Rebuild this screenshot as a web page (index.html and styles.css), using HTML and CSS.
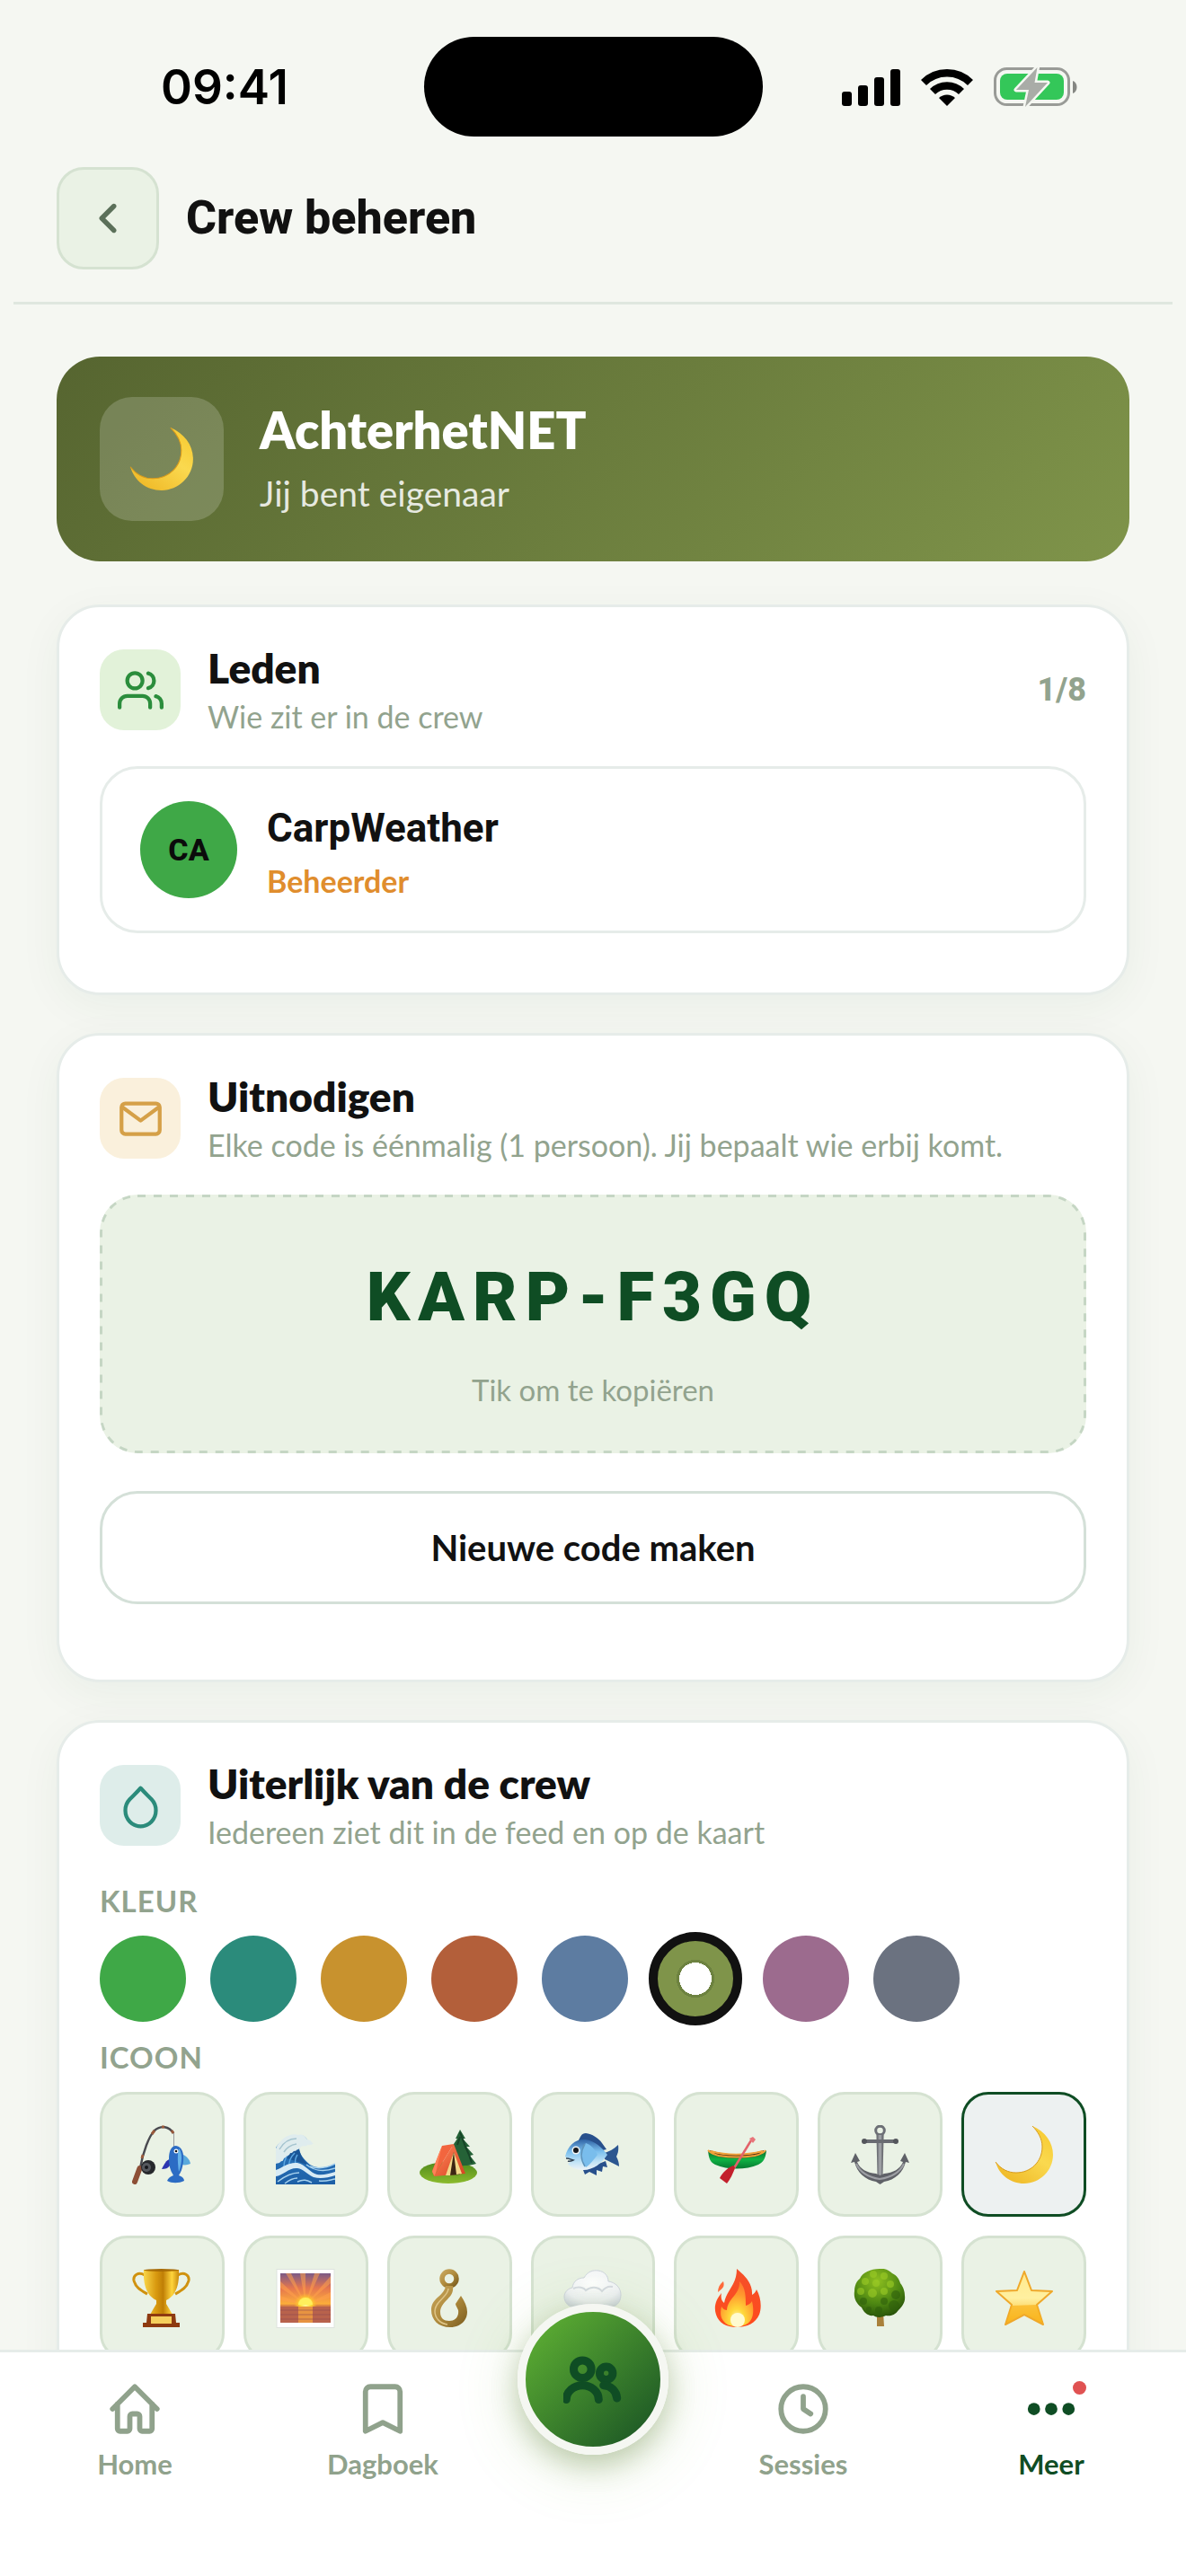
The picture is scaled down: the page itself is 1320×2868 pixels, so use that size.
FILE: index.html
```html
<!DOCTYPE html>
<html lang="nl">
<head>
  <meta charset="utf-8">
  <meta name="viewport" content="width=device-width, initial-scale=1">
  <title>Crew beheren</title>
  <link rel="stylesheet" href="styles.css">
</head>
<body>
<svg class="defs" aria-hidden="true">
  <defs>
    <linearGradient id="g-moon" x1="1" y1="0" x2="0.3" y2="1"><stop offset="0" stop-color="#f6c72c"/><stop offset="0.5" stop-color="#fad94f"/><stop offset="1" stop-color="#f0bb2a"/></linearGradient>
    <linearGradient id="g-gold" x1="0" y1="0" x2="1" y2="0"><stop offset="0" stop-color="#f9d649"/><stop offset="0.35" stop-color="#d99a10"/><stop offset="0.55" stop-color="#c07f06"/><stop offset="0.8" stop-color="#ffd53c"/><stop offset="1" stop-color="#c98a0c"/></linearGradient>
    <linearGradient id="g-sea" x1="0" y1="0" x2="0" y2="1"><stop offset="0" stop-color="#2f7fc4"/><stop offset="1" stop-color="#1d5fa6"/></linearGradient>
    <linearGradient id="g-sky" x1="0" y1="0" x2="0" y2="1"><stop offset="0" stop-color="#7b5a86"/><stop offset="0.3" stop-color="#e5764e"/><stop offset="0.62" stop-color="#fcae3a"/><stop offset="0.65" stop-color="#d98242"/><stop offset="1" stop-color="#8b4a58"/></linearGradient>
    <radialGradient id="g-sun"><stop offset="0" stop-color="#fff79a"/><stop offset="0.5" stop-color="#ffdc2e"/><stop offset="1" stop-color="#ffb52e" stop-opacity="0"/></radialGradient>
    <linearGradient id="g-tent" x1="0" y1="0" x2="1" y2="1"><stop offset="0" stop-color="#ff8a5c"/><stop offset="1" stop-color="#d8401f"/></linearGradient>
    <linearGradient id="g-grass" x1="0" y1="0" x2="0" y2="1"><stop offset="0" stop-color="#4f8a1c"/><stop offset="1" stop-color="#8cbb2d"/></linearGradient>
    <linearGradient id="g-fish" x1="0" y1="0" x2="0" y2="1"><stop offset="0" stop-color="#2f62a4"/><stop offset="0.4" stop-color="#7cc0ee"/><stop offset="0.75" stop-color="#c3e4f6"/><stop offset="1" stop-color="#eef3f6"/></linearGradient>
    <linearGradient id="g-hull" x1="0" y1="0" x2="0" y2="1"><stop offset="0" stop-color="#0a6a2c"/><stop offset="0.5" stop-color="#10b244"/><stop offset="1" stop-color="#077a30"/></linearGradient>
    <linearGradient id="g-steel" x1="0" y1="0" x2="1" y2="0"><stop offset="0" stop-color="#5c5f65"/><stop offset="0.5" stop-color="#a6a8ac"/><stop offset="1" stop-color="#56585e"/></linearGradient>
    <linearGradient id="g-hook" x1="0" y1="0" x2="1" y2="1"><stop offset="0" stop-color="#c6a55d"/><stop offset="0.5" stop-color="#b08b3d"/><stop offset="1" stop-color="#7a5c1f"/></linearGradient>
    <radialGradient id="g-cloud" cx="0.5" cy="0.35" r="0.7"><stop offset="0" stop-color="#ffffff"/><stop offset="0.7" stop-color="#f0f2f6"/><stop offset="1" stop-color="#d2d8e0"/></radialGradient>
    <linearGradient id="g-fire" x1="0" y1="0" x2="0" y2="1"><stop offset="0" stop-color="#f4502a"/><stop offset="1" stop-color="#ff4a1c"/></linearGradient>
    <radialGradient id="g-flame" cx="0.5" cy="0.85" r="0.8"><stop offset="0" stop-color="#fff9c0"/><stop offset="0.3" stop-color="#ffd83a"/><stop offset="0.7" stop-color="#ff9a2e"/><stop offset="1" stop-color="#ff7a2e"/></radialGradient>
    <radialGradient id="g-leaf" cx="0.45" cy="0.25" r="0.8"><stop offset="0" stop-color="#8fc020"/><stop offset="0.6" stop-color="#4c8612"/><stop offset="1" stop-color="#244c09"/></radialGradient>
    <linearGradient id="g-star" x1="0" y1="0" x2="0" y2="1"><stop offset="0" stop-color="#ffe98c"/><stop offset="0.5" stop-color="#fff0a0"/><stop offset="1" stop-color="#f9b314"/></linearGradient>
  </defs>

  <symbol id="i-moon" viewBox="0 0 66 66">
    <path d="M42 1C56 7 65 19 65 33 65 51 50 65 33 65 17 65 5 55 1 41 7 49 15 53 24 53 40 53 53 41 53 24 53 15 48 7 42 1Z" fill="url(#g-moon)"/>
    <path d="M42 1c6 6 11 14 11 23 0 17-13 29-29 29C15 53 7 49 1 41" fill="none" stroke="#d99b1c" stroke-width="1"/>
  </symbol>

  <symbol id="i-pole" viewBox="0 0 66 66">
    <path d="M9 48C12 30 19 12 25 6 32 0 41 1 46 9" fill="none" stroke="#4a4a50" stroke-width="2.4"/>
    <path d="M22 10l3-4M33 2l3 0M44 6l2 3M11 37l1-4" stroke="#9a5a3c" stroke-width="3"/>
    <path d="M46.500 9V24" stroke="#9a9ca0" stroke-width="1"/>
    <path d="M8.500 48L3 63" stroke="#8d4f36" stroke-width="6" stroke-linecap="round"/>
    <circle cx="18" cy="47" r="8" fill="#26282c"/><circle cx="16" cy="47" r="5" fill="#55585e"/><circle cx="16" cy="47" r="2" fill="#15161a"/>
    <path d="M42 38c-4 1-6 5-9 11 4 0 7-1 9-4z" fill="#2c35b0"/>
    <path d="M57 33c4 2 7 5 8 10-3 1-6 2-9 1z" fill="#5aa9dc"/>
    <path d="M49 23c7 1 9 9 8 18-1 8-3 12-5 15 3 1 6 3 6 6-6 3-14 3-19 0 1-3 4-5 7-6-4-6-5-12-5-18 0-8 2-15 8-15z" fill="#2c6cc4"/>
    <path d="M52 26c4 4 4 15 0 26-1-8-2-18 0-26z" fill="#67b4ea"/>
    <circle cx="49" cy="29" r="2.500" fill="#fff"/><circle cx="49" cy="29" r="1.300" fill="#111"/>
  </symbol>

  <symbol id="i-wave" viewBox="0 0 66 66">
    <path d="M0 25C6 16 16 10 26 11c4 0 8 2 9 6-6 0-9 3-9 8 0 7 5 13 12 19 9 5 16 4 28-1v23H0z" fill="url(#g-sea)"/>
    <path d="M5 34c4-7 12-12 20-12 1 10 5 16 11 22-10-3-20-5-31-10z" fill="#1a5596"/>
    <path d="M9 46c0-8 4-14 10-19M15 46c-1-6 2-11 6-15M22 44c-1-4 0-8 2-11" fill="none" stroke="#5aa5e0" stroke-width="1.500"/>
    <path d="M0 26C5 15 16 8 25 11c5-2 8 2 10 5 4 0 5 4 7 5-3 0-4 2-7 1-1 3-4 0-7 2-2 4-4 2-6 5-3-1-3 3-6 2-1 4-4 2-5 5-3 0-2 5-5 4-2 3-4 2-6 3z" fill="#dfecee"/>
    <path d="M4 27c4-7 11-12 19-12M9 30c3-5 8-8 14-9" fill="none" stroke="#a5c4cf" stroke-width="1.500"/>
    <path d="M0 50c8-3 14-9 24-8 9 2 14 11 22 13 7 1 13-1 20-3v4c-9 3-17 4-24 2-7-3-11-9-18-10C15 47 8 56 0 57z" fill="#d8ebf5"/>
    <path d="M38 46c9 3 18 2 28-3M34 44c10 8 20 8 32 4M2 63c9-7 16-10 24-10M24 63c7-3 10-2 16 1M48 62c7 1 12-1 18-2M10 65c5-4 9-6 14-6" fill="none" stroke="#a8d2ee" stroke-width="1.500"/>
  </symbol>

  <symbol id="i-tent" viewBox="0 0 66 66">
    <ellipse cx="32" cy="53" rx="32" ry="12" fill="url(#g-grass)"/>
    <path d="M44 40h4v8h-4z" fill="#6a4320"/>
    <path d="M45 5l6 10-3 0 8 9-4 0 8 9-4 1 7 9c-9 3-24 3-34 0l7-9-3-1 6-8-3-1 6-9-2 0z" fill="#256237"/>
    <path d="M45 8l3 8 3 8 4 9 3 9M45 13l-3 9" stroke="#174427" fill="none" stroke-width="2"/>
    <path d="M25 23l13-2-22 36-2-6z" fill="#f2653e"/>
    <path d="M25 23L14 52l3 5z" fill="#ff8259"/>
    <path d="M38 21L16 57l35-3z" fill="url(#g-tent)"/>
    <path d="M38 30l-8 26 15-1z" fill="#3d2513"/>
    <path d="M38 30l-9 26 5 0zM38 30l3 25 6-1z" fill="#f2d98a"/>
  </symbol>

  <symbol id="i-fish" viewBox="0 0 66 66">
    <path d="M16 19C19 13 20 9 25 9c7 1 14 5 18 11l5 7-12 3z" fill="#28508c"/>
    <path d="M46 31c5-2 10-4 15-9 1 7-1 11-2 13 2 4 3 7 3 11-6-3-11-6-16-8z" fill="#2c5690"/>
    <path d="M22 50l2 5 5-3 8 4 0-6 6 2 1-6 5 1-2-7z" fill="#28508c"/>
    <path d="M2 35C5 22 14 15 25 16c11 2 18 9 24 17-6 9-15 17-27 17C14 50 8 47 5 43l4-3z" fill="url(#g-fish)"/>
    <path d="M25 20c-6 8-6 19 0 27 5-3 9-9 13-14-3-6-7-11-13-13z" fill="#79bdec"/>
    <path d="M24 21c-5 8-5 17 0 25" fill="none" stroke="#5d93bb" stroke-width="1.500"/>
    <circle cx="14" cy="28" r="4.500" fill="#f2f4f4"/><circle cx="14" cy="28" r="3" fill="#14171c"/>
    <path d="M3 37c3 0 5 1 8 2-2 1-4 2-6 1" fill="none" stroke="#345" stroke-width="1.500"/>
  </symbol>

  <symbol id="i-canoe" viewBox="0 0 66 66">
    <path d="M3 28c20 6 40 6 60 0l-4 10H7z" fill="#4a2b0e"/>
    <path d="M1 28c1 9 2 13 8 16 14 6 34 6 48 0 6-3 8-7 9-16-4 4-8 6-13 7-13 2-27 2-40 0C9 34 5 32 1 28z" fill="url(#g-hull)"/>
    <path d="M1 28c4 4 8 5 12 6 13 2 27 2 40 0 5-1 9-2 12-6M4 29c18 5 38 5 58 0" fill="none" stroke="#f1a13a" stroke-width="2"/>
    <path d="M49 17L25 56" stroke="#e3626a" stroke-width="2.500"/>
    <path d="M47 15l4-2 3 3-3 4z" fill="#e8747a"/>
    <path d="M29 45c-7 3-12 8-15 14l8 6c4-5 7-11 9-18z" fill="#c3202c"/>
  </symbol>

  <symbol id="i-anchor" viewBox="0 0 66 66">
    <circle cx="32.500" cy="6" r="4.800" fill="none" stroke="#6d7076" stroke-width="3"/>
    <path d="M28.500 11h8l-1 47h-6z" fill="url(#g-steel)"/>
    <path d="M15 18h35" stroke="#6a6c72" stroke-width="4"/>
    <circle cx="15" cy="18" r="3" fill="#54565c"/><circle cx="50" cy="18" r="3" fill="#54565c"/>
    <path d="M0 42l5-11 5 9-3 1c3 8 11 12 21 13l4.500 2 4.500-2c10-1 18-5 21-13l-3-1 5-9 5 11-4-1c-3 12-12 20-24 22l-4.500 3-4.500-3C16 61 7 53 4 41z" fill="#5f6167"/>
    <path d="M6 43c4 9 13 15 26 17 14-2 23-8 27-17" fill="none" stroke="#9d9fa4" stroke-width="2"/>
  </symbol>

  <symbol id="i-trophy" viewBox="0 0 66 66">
    <path d="M14 7C7 3 1 7 2 13c2 8 8 11 15 15M51 7c7-4 13 0 12 6-2 8-8 11-15 15" fill="none" stroke="#d0920f" stroke-width="3"/>
    <path d="M13 1h39c1 16-3 29-14 34v4l3 5 4 7H20l4-7 3-5v-4C16 30 12 17 13 1z" fill="url(#g-gold)"/>
    <ellipse cx="32.500" cy="1.500" rx="19.500" ry="1.500" fill="#a86c06"/>
    <path d="M17 50h31l1 10h4v5H12v-5h4z" fill="#8e3a10"/>
    <path d="M21 53h23v8H21z" fill="#f5cf5c"/>
  </symbol>

  <symbol id="i-sunrise" viewBox="0 0 66 66">
    <rect x="1" y="0.500" width="64" height="65" fill="#fff" stroke="#dde3dd"/>
    <rect x="5" y="5" width="56" height="55" fill="url(#g-sky)"/>
    <path d="M33 40L5 14v7zM33 40L11 5h6zM33 40L27 5h6zM33 40L43 5h6zM33 40L61 8v8zM33 40L5 30v5zM33 40L61 26v6z" fill="#ffa04a" opacity="0.55"/>
    <circle cx="33" cy="40" r="13" fill="url(#g-sun)"/>
    <path d="M25 40a8 8 0 0 1 16 0z" fill="#ffef5c"/>
    <path d="M5 42h56v18H5z" fill="#b8624c"/>
    <path d="M25 42h16v18H25z" fill="#f3a03e" opacity="0.8"/>
    <path d="M5 46h56M5 51h56M5 56h56" stroke="#8f4a52" stroke-width="1" opacity="0.6"/>
  </symbol>

  <symbol id="i-hook" viewBox="0 0 66 66">
    <circle cx="33" cy="11" r="8" fill="none" stroke="url(#g-hook)" stroke-width="5.500"/>
    <path d="M29 19h8c1 7-2 11-6 15-5 5-8 9-8 14 0 7 4 10 10 10 7 0 11-5 10-12-1-3-3-5-3-7 2-3 4-6 6-9 4 6 7 12 7 18 0 10-8 17-19 17-13 0-21-8-21-19 0-14 14-15 16-27z" fill="url(#g-hook)"/>
    <path d="M32 22c0 9-15 14-15 25 0 8 6 14 14 15" fill="none" stroke="#dfc587" stroke-width="1.500"/>
  </symbol>

  <symbol id="i-cloud" viewBox="0 0 66 66">
    <path d="M10 21c1-7 6-11 13-11 4-7 10-9 16-8 7 1 11 6 11 12 8 1 14 7 14 15 0 9-6 14-14 14H14C6 43 1 38 1 31c0-5 4-9 9-10z" fill="url(#g-cloud)" stroke="#cfd5de"/>
    <path d="M11 22c6-3 12-1 14 2 6-5 14-4 18 1 4-5 8-6 12-5" fill="none" stroke="#d5dae2" stroke-width="2"/>
  </symbol>

  <symbol id="i-fire" viewBox="0 0 66 66">
    <path d="M33 0c7 6 18 15 17 29 2-1 4-3 5-6 5 9 6 20 3 28-4 9-13 14-25 14S13 60 10 51C7 42 10 34 16 27c-1 5 0 9 3 11 3-15 14-20 14-38z" fill="url(#g-fire)"/>
    <path d="M36 14c7 7 7 17 7 27 3-1 5-2 7-5 3 12 1 23-7 26-7 3-16 3-22-1-6-5-7-11-5-19 2 3 4 4 6 4 1-14 15-17 14-32z" fill="url(#g-flame)"/>
    <path d="M18 14c2 6-1 8-6 12 0-5 2-9 6-12z" fill="#ff6a3a"/>
    <ellipse cx="34" cy="57" rx="8" ry="8" fill="#fffbd0"/>
  </symbol>

  <symbol id="i-tree" viewBox="0 0 66 66">
    <path d="M29 48h7l1 16h-8z" fill="#a9803a"/>
    <path d="M32 0c6-1 11 2 14 5 5 2 8 7 9 11 4 5 5 10 5 14 1 7-3 12-7 16-4 6-10 7-14 6-4 2-10 3-14 0-6 1-11-4-13-9C5 38 3 31 4 25c0-6 2-11 6-14C13 4 22 0 32 0z" fill="url(#g-leaf)"/>
    <g fill="#9ccc26" opacity="0.6"><circle cx="25" cy="6" r="4"/><circle cx="37" cy="8" r="4"/><circle cx="16" cy="14" r="4"/><circle cx="28" cy="16" r="4"/><circle cx="44" cy="17" r="4"/><circle cx="11" cy="25" r="4"/><circle cx="24" cy="27" r="5"/><circle cx="37" cy="25" r="4"/></g>
    <g fill="#2f600c" opacity="0.6"><circle cx="50" cy="29" r="5"/><circle cx="14" cy="36" r="4"/><circle cx="37" cy="36" r="4"/><circle cx="48" cy="41" r="6"/><circle cx="31" cy="46" r="4"/><circle cx="20" cy="45" r="3"/></g>
  </symbol>

  <symbol id="i-star" viewBox="0 0 66 66">
    <path d="M33 3l8 21 23 1-17 15 7 22-21-11-21 11 7-22L2 25l23-1z" fill="url(#g-star)" stroke="#efa82a" stroke-width="2" stroke-linejoin="round"/>
    <path d="M13 60l6-19 28-1 7 21-21-11z" fill="#f9b41c" opacity="0.7"/>
  </symbol>
</svg>

<div class="app">
  <div class="status">
    <span class="status-time">09:41</span>
    <span class="island"></span>
    <span class="status-icons">
      <svg width="65" height="42" viewBox="0 0 65 42"><rect y="26" width="11" height="16" rx="3"/><rect x="18" y="19" width="11" height="23" rx="3"/><rect x="36" y="10" width="11" height="32" rx="3"/><rect x="54" y="1" width="11" height="41" rx="3"/></svg>
      <svg width="58" height="42" viewBox="0 0 58 42"><path d="M3 16a36.800 36.800 0 0 1 52 0M13 26a22.700 22.700 0 0 1 32 0" fill="none" stroke="#000" stroke-width="8.500"/><path d="M29 42l-9-9a13 13 0 0 1 18 0z"/></svg>
      <svg width="93" height="46" viewBox="0 0 93 46"><rect x="1.500" y="2.500" width="82" height="40" rx="13" fill="none" stroke="#999b97" stroke-width="3"/><path d="M88 16c6 2 6 12 0 14z" fill="#858783"/><rect x="7" y="8" width="71" height="29" rx="8" fill="#34c759"/><path d="M48.500 1L25 26h14l-4 19 25-27H45.500z" fill="#a9aca7" stroke="#f5f7f2" stroke-width="5" stroke-linejoin="round" paint-order="stroke"/></svg>
    </span>
  </div>

  <header class="topbar">
    <button class="back" type="button" aria-label="Terug">
      <svg width="54" height="54" viewBox="0 0 24 24"><path d="M15 18l-6-6 6-6"/></svg>
    </button>
    <h1 class="topbar-title">Crew beheren</h1>
  </header>

  <main class="content">
    <section class="hero">
      <span class="hero-icon"><svg width="72" height="72"><use href="#i-moon"/></svg></span>
      <div class="hero-text">
        <h2 class="hero-name">AchterhetNET</h2>
        <p class="hero-role">Jij bent eigenaar</p>
      </div>
    </section>

    <section class="card">
      <div class="card-head">
        <span class="card-icon card-icon-green"><svg width="51" height="51" viewBox="0 0 24 24"><path d="M17 21v-2a4 4 0 0 0-4-4H5a4 4 0 0 0-4 4v2M23 21v-2a4 4 0 0 0-3-3.870M16 3.130a4 4 0 0 1 0 7.750"/><circle cx="9" cy="7" r="4"/></svg></span>
        <div class="card-titles">
          <h2 class="card-title">Leden</h2>
          <p class="card-sub">Wie zit er in de crew</p>
        </div>
        <span class="count">1/8</span>
      </div>
      <div class="member">
        <span class="avatar">CA</span>
        <div class="member-text">
          <p class="member-name">CarpWeather</p>
          <p class="member-role">Beheerder</p>
        </div>
      </div>
    </section>

    <section class="card">
      <div class="card-head">
        <span class="card-icon card-icon-amber"><svg width="51" height="51" viewBox="0 0 24 24"><rect x="2" y="4" width="20" height="16" rx="2"/><path d="M2.500 6l9.500 7 9.500-7"/></svg></span>
        <div class="card-titles">
          <h2 class="card-title">Uitnodigen</h2>
          <p class="card-sub">Elke code is éénmalig (1 persoon). Jij bepaalt wie erbij komt.</p>
        </div>
      </div>
      <button class="code" type="button">
        <svg class="code-outline" aria-hidden="true"><rect x="0" y="0" width="100%" height="100%" rx="42"/></svg>
        <span class="code-value">KARP-F3GQ</span>
        <span class="code-hint">Tik om te kopiëren</span>
      </button>
      <button class="new-code" type="button">Nieuwe code maken</button>
    </section>

    <section class="card">
      <div class="card-head">
        <span class="card-icon card-icon-teal"><svg width="51" height="51" viewBox="0 0 24 24"><path d="M12 2.700C14 5 16 6.800 17.700 8.600a8 8.300 0 1 1-11.400 0C8 6.800 10 5 12 2.700z"/></svg></span>
        <div class="card-titles">
          <h2 class="card-title">Uiterlijk van de crew</h2>
          <p class="card-sub">Iedereen ziet dit in de feed en op de kaart</p>
        </div>
      </div>
      <h3 class="field-label">KLEUR</h3>
      <div class="swatches" role="radiogroup" aria-label="Kleur">
        <input class="swatch green" type="radio" name="kleur" aria-label="Groen">
        <input class="swatch teal" type="radio" name="kleur" aria-label="Turquoise">
        <input class="swatch amber" type="radio" name="kleur" aria-label="Oker">
        <input class="swatch rust" type="radio" name="kleur" aria-label="Roest">
        <input class="swatch blue" type="radio" name="kleur" aria-label="Blauw">
        <input class="swatch olive" type="radio" name="kleur" aria-label="Olijf" checked>
        <input class="swatch mauve" type="radio" name="kleur" aria-label="Mauve">
        <input class="swatch slate" type="radio" name="kleur" aria-label="Leisteen">
      </div>
      <h3 class="field-label">ICOON</h3>
      <div class="tiles" role="radiogroup" aria-label="Icoon">
        <label class="tile"><input type="radio" name="icoon" aria-label="Hengel"><svg><use href="#i-pole"/></svg></label>
        <label class="tile"><input type="radio" name="icoon" aria-label="Golf"><svg><use href="#i-wave"/></svg></label>
        <label class="tile"><input type="radio" name="icoon" aria-label="Tent"><svg><use href="#i-tent"/></svg></label>
        <label class="tile"><input type="radio" name="icoon" aria-label="Vis"><svg><use href="#i-fish"/></svg></label>
        <label class="tile"><input type="radio" name="icoon" aria-label="Kano"><svg><use href="#i-canoe"/></svg></label>
        <label class="tile"><input type="radio" name="icoon" aria-label="Anker"><svg><use href="#i-anchor"/></svg></label>
        <label class="tile"><input type="radio" name="icoon" aria-label="Maan" checked><svg><use href="#i-moon"/></svg></label>
        <label class="tile"><input type="radio" name="icoon" aria-label="Beker"><svg><use href="#i-trophy"/></svg></label>
        <label class="tile"><input type="radio" name="icoon" aria-label="Zonsopgang"><svg><use href="#i-sunrise"/></svg></label>
        <label class="tile"><input type="radio" name="icoon" aria-label="Haak"><svg><use href="#i-hook"/></svg></label>
        <label class="tile"><input type="radio" name="icoon" aria-label="Wolk"><svg><use href="#i-cloud"/></svg></label>
        <label class="tile"><input type="radio" name="icoon" aria-label="Vuur"><svg><use href="#i-fire"/></svg></label>
        <label class="tile"><input type="radio" name="icoon" aria-label="Boom"><svg><use href="#i-tree"/></svg></label>
        <label class="tile"><input type="radio" name="icoon" aria-label="Ster"><svg><use href="#i-star"/></svg></label>
      </div>
    </section>
  </main>

  <nav class="tabs">
    <a class="tab" href="#home"><svg viewBox="0 0 24 24"><path d="M3 12l9-9 9 9M5 10v10a1 1 0 0 0 1 1h3m10-11v10a1 1 0 0 1-1 1h-3m-6 0a1 1 0 0 0 1-1v-5a1 1 0 0 1 1-1h2a1 1 0 0 1 1 1v5a1 1 0 0 0 1 1"/></svg>Home</a>
    <a class="tab" href="#dagboek"><svg viewBox="0 0 24 24"><path d="M5 5a2 2 0 0 1 2-2h10a2 2 0 0 1 2 2v16l-7-3.500L5 21V5z"/></svg>Dagboek</a>
    <a class="fab" href="#crew" aria-label="Crew"><svg width="66" height="66" viewBox="-33 -33 66 66"><circle cx="-11.700" cy="-11.300" r="9.800"/><circle cx="14.700" cy="-6.700" r="7.200"/><path d="M-29.700 22.500A18 15.800 0 0 1 6.300 22.500M11.700 6.700C20 7 26 13 26.700 21"/></svg></a>
    <a class="tab" href="#sessies"><svg viewBox="0 0 24 24"><circle cx="12" cy="12" r="9"/><path d="M12 7v5l3 2"/></svg>Sessies</a>
    <a class="tab tab-active" href="#meer"><span class="tab-icon"><svg viewBox="0 0 24 24"><circle class="dot" cx="5" cy="12" r="2.500"/><circle class="dot" cx="12" cy="12" r="2.500"/><circle class="dot" cx="19" cy="12" r="2.500"/></svg><span class="badge"></span></span>Meer</a>
  </nav>
</div>
</body>
</html>
```
FILE: styles.css
```css
:root {
  --bg: #f5f7f2;
  --ink: #111111;
  --muted: #92a38e;
  --forest: #0f4d24;
  --line: #e6ece9;
  --tint: #eaf2e5;
  --tint-line: #d5e2d1;
  --text: "Lato", sans-serif;
  --display: "Roboto", sans-serif;
}

* { box-sizing: border-box; }

body {
  margin: 0;
  background: var(--bg);
  color: var(--ink);
  font-family: var(--text);
}

h1, h2, h3, p { margin: 0; }
button { font: inherit; color: inherit; cursor: pointer; }
svg { display: block; }

.defs { position: absolute; width: 0; height: 0; }

.app {
  display: flex;
  flex-direction: column;
  height: 100vh;
}

/* status bar */
.status {
  flex: none;
  display: grid;
  grid-template-columns: 1fr 377px 1fr;
  align-items: center;
  padding: 41px 0 34px;
}
.status-time {
  padding-left: 179px;
  font: 600 53px/60px "Inter", sans-serif;
  color: #000;
}
.island {
  height: 111px;
  border-radius: 56px;
  background: #000;
}
.status-icons {
  display: flex;
  align-items: center;
  justify-content: flex-end;
  gap: 23px;
  padding-right: 121px;
}

/* top bar */
.topbar {
  flex: none;
  display: flex;
  align-items: center;
  gap: 30px;
  margin: 0 15px;
  padding: 0 48px 36px;
  border-bottom: 3px solid #dfe7df;
}
.back {
  display: grid;
  place-items: center;
  width: 114px;
  height: 114px;
  padding: 0;
  border: 3px solid var(--tint-line);
  border-radius: 30px;
  background: var(--tint);
}
.back svg {
  fill: none;
  stroke: #5b7059;
  stroke-width: 2.4;
  stroke-linecap: round;
  stroke-linejoin: round;
}
.topbar-title { font: 800 52px/60px var(--display); }

.content {
  flex: 1;
  min-height: 0;
  overflow-y: auto;
  scrollbar-width: none;
  padding: 58px 63px;
}

/* crew banner */
.hero {
  display: flex;
  align-items: center;
  gap: 40px;
  margin-bottom: 48px;
  padding: 45px 48px;
  border-radius: 48px;
  background: linear-gradient(135deg, #566530, #7f944a);
  color: #fff;
}
.hero-icon {
  display: grid;
  place-items: center;
  width: 138px;
  height: 138px;
  border-radius: 36px;
  background: rgba(255, 255, 255, 0.18);
}
.hero-text { display: grid; gap: 10px; }
.hero-name { font-size: 56px; line-height: 66px; font-weight: 800; }
.hero-role { font-size: 39px; line-height: 54px; color: rgba(255, 255, 255, 0.85); }

/* cards */
.card {
  margin-bottom: 42px;
  padding: 44px 45px 66px;
  border: 3px solid var(--line);
  border-radius: 48px;
  background: #fff;
  box-shadow: 0 12px 48px rgba(15, 77, 36, 0.05);
}
.card-head {
  display: flex;
  align-items: center;
  gap: 30px;
  margin-bottom: 37px;
}
.card-icon {
  display: grid;
  place-items: center;
  width: 90px;
  height: 90px;
  border-radius: 27px;
}
.card-icon svg {
  fill: none;
  stroke: currentColor;
  stroke-width: 2;
  stroke-linecap: round;
  stroke-linejoin: round;
}
.card-icon-green { background: #e2f2d9; color: #2b8d3c; }
.card-icon-amber { background: #faf0dc; color: #d5a048; }
.card-icon-teal { background: #deedea; color: #2b8b7b; }
.card-titles { flex: 1; display: grid; gap: 12px; }
.card-title { font-size: 46px; line-height: 48px; font-weight: 800; }
.card-sub { font-size: 34px; line-height: 36px; color: var(--muted); }
.count { font: 800 36px/40px var(--display); color: var(--muted); }

.member {
  display: flex;
  align-items: center;
  gap: 33px;
  padding: 36px 42px;
  border: 3px solid var(--line);
  border-radius: 42px;
}
.avatar {
  display: grid;
  place-items: center;
  width: 108px;
  height: 108px;
  border-radius: 50%;
  background: #3fa847;
  font: 800 34px/40px var(--display);
  color: #0b0b0b;
}
.member-text { display: grid; gap: 12px; }
.member-name { font: 700 44px/57px var(--display); }
.member-role { font-size: 34px; line-height: 36px; font-weight: 700; color: #e08d2d; }

.code {
  position: relative;
  display: grid;
  gap: 20px;
  width: 100%;
  margin-bottom: 42px;
  padding: 51px;
  border: 0;
  border-radius: 42px;
  background: var(--tint);
  text-align: center;
  overflow: hidden;
}
.code-outline {
  position: absolute;
  inset: 0;
  width: 100%;
  height: 100%;
  fill: none;
  stroke: #c5d6c4;
  stroke-width: 6;
  stroke-dasharray: 9 9;
}
.code-value {
  font: 900 76px/126px var(--display);
  letter-spacing: 9px;
  color: var(--forest);
}
.code-hint { font-size: 33px; line-height: 40px; color: var(--muted); }
.new-code {
  width: 100%;
  height: 126px;
  margin-bottom: 18px;
  border: 3px solid #d4e0d8;
  border-radius: 42px;
  background: #fff;
  font-size: 40px;
  font-weight: 700;
}

.field-label {
  margin-bottom: 18px;
  font-size: 33px;
  line-height: 42px;
  font-weight: 700;
  letter-spacing: 1px;
  color: var(--muted);
}
.swatches {
  display: flex;
  gap: 27px;
  margin-bottom: 18px;
}
.swatch {
  appearance: none;
  width: 96px;
  height: 96px;
  margin: 0;
  border-radius: 50%;
  background: var(--color);
}
.swatch:checked {
  width: 104px;
  height: 104px;
  margin: -4px;
  border: 10px solid var(--ink);
  background: radial-gradient(circle, #fff 18px, #6d8240 18px 21px, var(--color) 21px);
}
.green { --color: #3fa847; }
.teal { --color: #2b8b7b; }
.amber { --color: #c8922e; }
.rust { --color: #b35f3a; }
.blue { --color: #5d7ca1; }
.olive { --color: #7f944a; }
.mauve { --color: #9c6b8e; }
.slate { --color: #6b7280; }

.tiles {
  display: grid;
  grid-template-columns: repeat(7, 1fr);
  gap: 21px;
}
.tile {
  position: relative;
  display: grid;
  place-items: center;
  height: 139px;
  border: 3px solid var(--tint-line);
  border-radius: 30px;
  background: var(--tint);
}
.tile input {
  position: absolute;
  inset: 0;
  margin: 0;
  opacity: 0;
}
.tile svg { width: 66px; height: 66px; }
.tile:has(input:checked) { border-color: var(--forest); background: #edf1f1; }

/* tab bar */
.tabs {
  position: relative;
  flex: none;
  display: grid;
  grid-template-columns: 1fr 1fr 192px 1fr 1fr;
  align-items: start;
  justify-items: center;
  height: 252px;
  padding: 30px 12px 0;
  border-top: 3px solid var(--line);
  background: #fff;
}
.tab {
  display: grid;
  justify-items: center;
  gap: 10px;
  font-size: 31px;
  line-height: 36px;
  font-weight: 700;
  color: #90a28c;
  text-decoration: none;
}
.tab svg {
  width: 66px;
  height: 66px;
  fill: none;
  stroke: currentColor;
  stroke-width: 2.1;
  stroke-linecap: round;
  stroke-linejoin: round;
}
.tab-active { color: var(--forest); }
.tab .dot { fill: currentColor; stroke: none; }
.tab-icon { position: relative; }
.badge {
  position: absolute;
  top: 2px;
  right: -6px;
  width: 15px;
  height: 15px;
  border-radius: 50%;
  background: #e05252;
}
.fab {
  display: grid;
  place-items: center;
  width: 168px;
  height: 168px;
  margin-top: -84px;
  border-radius: 50%;
  border: 9px solid var(--bg);
  background: linear-gradient(135deg, #62b534, #175024);
  box-shadow: 0 12px 30px rgba(70, 100, 30, 0.28), 0 12px 72px rgba(110, 170, 50, 0.2);
}
.fab svg {
  fill: none;
  stroke: var(--forest);
  stroke-width: 9;
  stroke-linecap: round;
}
```
